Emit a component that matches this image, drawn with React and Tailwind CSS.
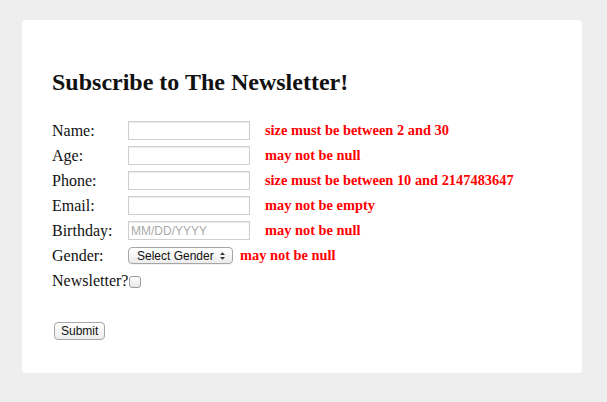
const fields = [
  { label: 'Name:', error: 'size must be between 2 and 30' },
  { label: 'Age:', error: 'may not be null' },
  { label: 'Phone:', error: 'size must be between 10 and 2147483647' },
  { label: 'Email:', error: 'may not be empty' },
  { label: 'Birthday:', error: 'may not be null', placeholder: 'MM/DD/YYYY' },
];

// simple form row: label column, input, inline validation message
function FieldRow({ label, error, placeholder }) {
  return (
    <div className="flex items-center h-[25px]">
      <span className="w-[76px] shrink-0">{label}</span>
      <input
        type="text"
        placeholder={placeholder}
        className="w-[122px] h-[19px] border border-[#cfcfcf] shadow-[inset_0_1px_1px_rgba(0,0,0,0.08)] bg-white px-[2px] text-[12px] font-['Liberation_Sans',Arial,sans-serif] placeholder:text-[#a9a9a9] outline-none"
      />
      <span className="ml-[15px] text-[14.4px] font-bold text-[#ff0000]">{error}</span>
    </div>
  );
}

export default function App() {
  return (
    <div className="min-h-[402px] bg-[#eeeeee] pl-[22px] pr-[25px] pt-[20px] font-['Liberation_Serif','Times_New_Roman',serif] text-[16px] text-[#111]">
      <div className="bg-white rounded-[4px] h-[353px] pl-[30px] pt-[46px]">
        <h2 className="text-[24px] font-bold leading-[32px] text-[#111]">Subscribe to The Newsletter!</h2>

        <div className="mt-[20px]">
          {fields.map((f) => (
            <FieldRow key={f.label} {...f} />
          ))}

          {/* gender select */}
          <div className="flex items-center h-[25px]">
            <span className="w-[76px] shrink-0">Gender:</span>
            <div className="w-[105px] h-[17px] rounded-[4px] border border-[#a6a6a6] bg-gradient-to-b from-white to-[#ececec] flex items-center justify-between pl-[8px] pr-[7px] font-['Liberation_Sans',Arial,sans-serif] text-[12px] text-[#111] shadow-[0_1px_0_rgba(0,0,0,0.05)]">
              <span>Select Gender</span>
              <svg width="5" height="8" viewBox="0 0 6 9" fill="#333">
                <path d="M3 0L6 3.3H0z" />
                <path d="M3 9L0 5.7H6z" />
              </svg>
            </div>
            <span className="ml-[7px] text-[14.4px] font-bold text-[#ff0000]">may not be null</span>
          </div>

          {/* newsletter checkbox */}
          <div className="flex items-center h-[25px]">
            <span>Newsletter?</span>
            <span className="ml-[1px] mt-[2px] w-[12px] h-[12px] rounded-[3px] border border-[#9b9b9b] bg-gradient-to-b from-white to-[#e8e8e8]" />
          </div>
        </div>

        <button className="mt-[29px] ml-[2px] h-[18px] px-[6px] rounded-[4px] border border-[#a6a6a6] bg-gradient-to-b from-white to-[#ececec] font-['Liberation_Sans',Arial,sans-serif] text-[12px] leading-[16px] text-[#111]">
          Submit
        </button>
      </div>
    </div>
  );
}
